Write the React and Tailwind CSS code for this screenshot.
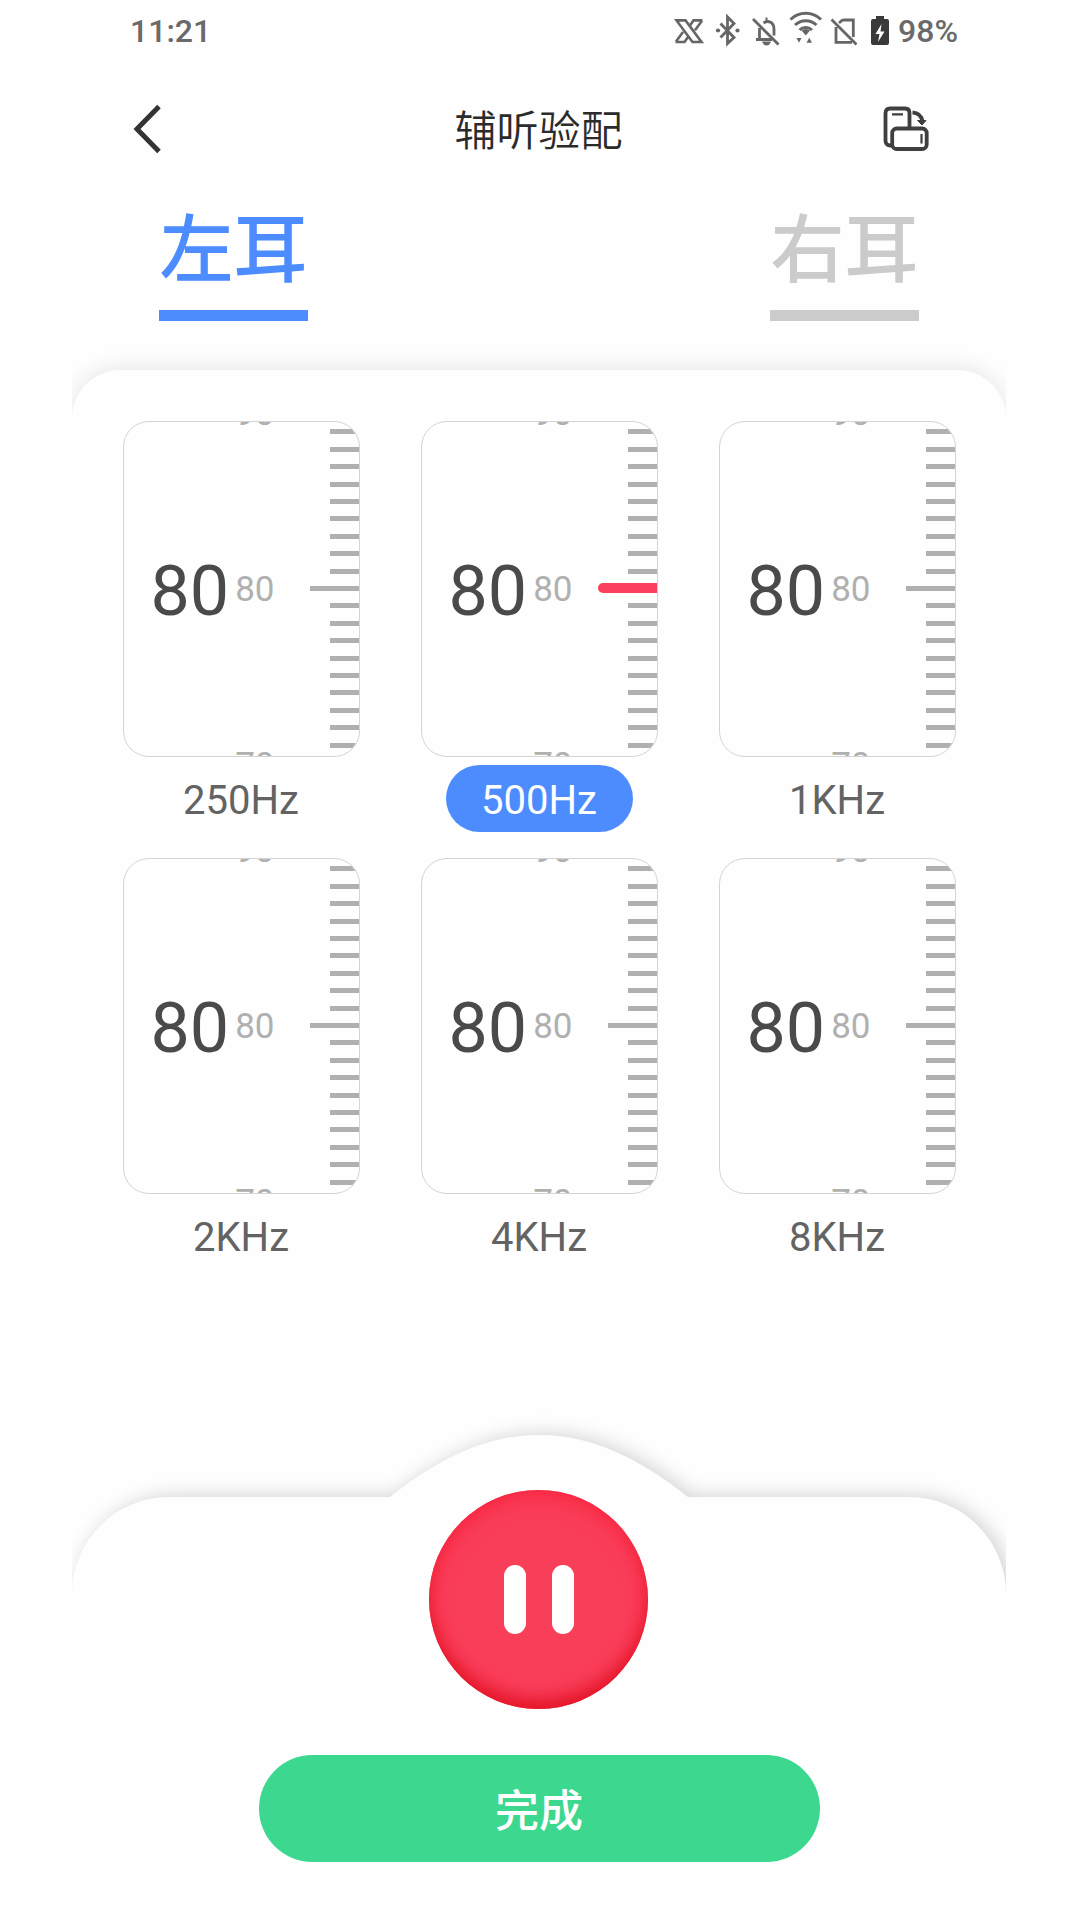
import { useState } from 'react';

const BANDS = ['250Hz', '500Hz', '1KHz', '2KHz', '4KHz', '8KHz'];
const TICKS = Array.from({ length: 19 }, (_, i) => i - 9);

export default function App() {
  const [ear, setEar] = useState('left');
  const [active, setActive] = useState('500Hz');

  return (
    <div className="w-[1080px] h-[1920px] bg-[#fefefe] overflow-hidden font-['Roboto','Noto_Sans_CJK_SC',sans-serif]">
      <div className="ml-[72px] w-[934px] h-full flex flex-col overflow-hidden">
        <StatusBar />

        <header className="h-[134px] shrink-0 flex items-center justify-between pl-[61px] pr-[77px]">
          <button className="w-[61px]">
            <svg className="w-[28px] h-[50px]" viewBox="0 0 28 50" fill="none" stroke="#333" strokeWidth="5">
              <path d="M26 2.5 4 25l22 22.5" />
            </svg>
          </button>
          <h1 className="pt-[5px] text-[42px] leading-none font-[350] text-[#2b2b2b]">辅听验配</h1>
          <button>
            <RotateIcon />
          </button>
        </header>

        <nav className="shrink-0 flex justify-between pl-[87px] pr-[87px]">
          <EarTab label="左耳" selected={ear === 'left'} onClick={() => setEar('left')} />
          <EarTab label="右耳" selected={ear === 'right'} onClick={() => setEar('right')} />
        </nav>

        <main className="mt-[49px] -mb-[200px] flex-1 rounded-t-[48px] bg-[#fefefe] pt-[51px] pl-[50.5px] shadow-[0_-2px_22px_rgba(0,0,0,0.1)]">
          <div className="grid grid-cols-[237px_237px_237px] gap-x-[61px]">
            {BANDS.map((band) => (
              <BandDial key={band} band={band} active={band === active} onSelect={() => setActive(band)} />
            ))}
          </div>
        </main>

        <Footer />
      </div>
    </div>
  );
}

function StatusBar() {
  return (
    <div className="h-[62px] shrink-0 flex items-center justify-between pl-[58px] pr-[48px] text-[32px] font-medium text-[#6a6a6a]">
      <span>11:21</span>
      <div className="flex items-center">
        <svg className="w-[184px] h-[40px]" viewBox="674 10 184 40" fill="none" stroke="#666" strokeWidth="2.8">
          {/* network booster */}
          <path d="M677.500 19.400h9L702.500 41h-9zM703.500 19.400h-9l-3.500 5M703 19.800l-7 9.500M676.500 41h9l3.500-5M677 40.600l7-9.500" strokeWidth="2.600" />
          {/* bluetooth */}
          <path d="m721.500 22.500 13.500 14-6.500 6V16l6.500 6.500-13.500 14" />
          <g fill="#666" stroke="none">
            <circle cx="719" cy="29.500" r="2.100" />
            <circle cx="738.500" cy="29.500" r="2.100" />
          </g>
          {/* muted bell */}
          <path d="m754 18 25.500 25.500M760.500 27v11.500M757 38.500h16M764.500 22c5-3.500 10.500-.5 10.500 6v6.500" />
          <path d="M767.500 16.500v4M764.500 41.500a3.200 3.200 0 0 0 6 0z" fill="#666" strokeWidth="2" />
          {/* wifi */}
          <path d="M791.500 18.500a22 22 0 0 1 30.500 0M796 24a15.500 15.500 0 0 1 21.500 0M800.500 29a9 9 0 0 1 12.500 0" strokeWidth="3" />
          <path d="M802.500 29.500q4.200-3 8.500 0l-4.200 5zM797.500 37h5l-2.500 4.800zM807.500 41.800h5.500l-2.700-5z" fill="#666" stroke="none" />
          {/* no sim */}
          <path d="m832.500 18.500 25 25M837 26v15.300h16M844 19h10.300v17M844 18.500l-4 3.500" />
        </svg>
        <svg className="ml-[14px] w-[18px] h-[30px]" viewBox="0 0 18 30">
          <path d="M5 0h8v3h3q2 0 2 2v22q0 2-2 2H2q-2 0-2-2V5q0-2 2-2h3z" fill="#3a3a3a" />
          <path d="M10.500 8 4.500 18H8.500L7 26l6.500-10.500H9.500z" fill="#fff" />
        </svg>
        <span className="ml-[9px]">98%</span>
      </div>
    </div>
  );
}

function RotateIcon() {
  return (
    <svg className="w-[46px] h-[46px]" viewBox="0 0 46 46" fill="none" stroke="#3f3f3f" strokeWidth="3.800">
      <path d="M8 39.500H7q-4.500-.5-4.500-5V7q0-4.500 4.500-4.500h15q4.500 0 4.500 4.500v14" />
      <rect x="9.200" y="22.500" width="34.500" height="20.500" rx="4.500" />
      <path d="M9 8.300h11M38.500 28v9.500" strokeWidth="2.200" />
      <path d="M29.500 6.500q8.500.5 10 9" />
      <path d="M34.500 14.500h8.500l-4 4.500z" fill="#3f3f3f" strokeWidth="1" />
    </svg>
  );
}

function EarTab({ label, selected, onClick }) {
  return (
    <button onClick={onClick} className={`w-[149px] ${selected ? 'text-[#4c8cff]' : 'text-[#cbcbcb]'}`}>
      <span className="block h-[106px] text-[74px] leading-[110px] font-medium whitespace-nowrap">{label}</span>
      <span className="block mt-[8px] h-[11px] bg-current" />
    </button>
  );
}

function BandDial({ band, active, onSelect }) {
  return (
    <div className="h-[437px] flex flex-col items-center">
      <div className="w-[237px] h-[336px] shrink-0 flex items-center justify-between overflow-hidden rounded-[26px] border border-[#d4d4d4]">
        <div className="pl-[27px] flex items-center">
          <span className="pt-[3px] text-[70px] leading-none text-[#4a4a4a]">80</span>
          <div className="ml-[6px] pt-[1px] flex flex-col gap-[141px] text-[35px] leading-[35px] text-[#b0b0b0]">
            {[90, 80, 70].map((v) => (
              <span key={v}>{v}</span>
            ))}
          </div>
        </div>
        <div className="flex flex-col items-end -mt-[1px]">
          {TICKS.map((t) => (
            <div key={t} className="h-[17.4px] flex items-center justify-end">
              <Tick center={t === 0} active={active} />
            </div>
          ))}
        </div>
      </div>
      <button
        onClick={onSelect}
        className={`mt-[8px] h-[67px] w-[187px] rounded-full text-[40px] leading-[71px] ${active ? 'bg-[#4c8cff] text-white' : 'text-[#636363]'}`}
      >
        {band}
      </button>
    </div>
  );
}

function Tick({ center, active }) {
  if (center && active) return <span className="w-[59px] h-[10px] rounded-l-full bg-[#fa3e5b]" />;
  return <span className={`h-[5px] bg-[#b0b0b0] ${center ? 'w-[49px]' : 'w-[29px]'}`} />;
}

function Footer() {
  return (
    <footer className="relative h-[423px] shrink-0 flex flex-col items-center">
      {/* panel and its hump share one shadow */}
      <div className="absolute inset-0 drop-shadow-[5px_-2px_9px_rgba(0,0,0,0.16)]">
        <div className="h-full rounded-t-[97px] bg-[#fefefe]" />
        <svg className="absolute left-[318px] -top-[62px] w-[298px] h-[63px]" viewBox="0 0 298 63">
          <path d="M0 62C50 22 98 0 149 0s99 22 149 62v1H0z" fill="#fefefe" />
        </svg>
      </div>
      <button className="relative -mt-[7px] mr-[1px] size-[219px] shrink-0 flex items-center justify-center gap-[26px] rounded-full bg-[#f93e5a] shadow-[inset_0_-12px_16px_-2px_#e4172a,inset_0_6px_20px_#f92740]">
        <span className="w-[22px] h-[69px] rounded-full bg-white" />
        <span className="w-[22px] h-[69px] rounded-full bg-white" />
      </button>
      <button className="relative mt-[46px] pt-[6px] w-[561px] h-[107px] rounded-full bg-[#3dd890] text-[44px] font-medium text-white">
        完成
      </button>
    </footer>
  );
}
